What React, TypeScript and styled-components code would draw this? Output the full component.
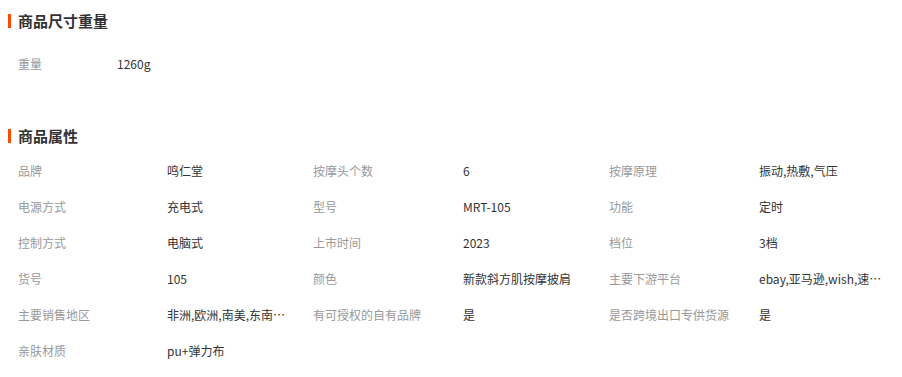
import React from "react";
import styled, { createGlobalStyle } from "styled-components";

const Global = createGlobalStyle`
  html, body { margin: 0; padding: 0; background: #fff; }
  body {
    font-family: "Microsoft YaHei", "Noto Sans CJK SC", "Noto Sans", sans-serif;
    font-size: 12px;
    color: #333;
  }
`;

const Page = styled.div`
  width: 902px;
  padding-top: 11px;
`;

const Section = styled.section<{ $gap: number }>`
  margin-bottom: ${(p) => p.$gap}px;
`;

const Title = styled.h3`
  margin: 0;
  padding-left: 18px;
  position: relative;
  height: 20px;
  line-height: 20px;
  font-size: 15px;
  font-weight: bold;
  color: #333;
  &::before {
    content: "";
    position: absolute;
    left: 8px;
    top: 3px;
    width: 3px;
    height: 14px;
    background: #ff4a00;
  }
`;

const Grid = styled.div<{ $cols: string; $top: number }>`
  display: grid;
  grid-template-columns: ${(p) => p.$cols};
  padding-left: 18px;
  margin-top: ${(p) => p.$top}px;
`;

const Label = styled.div`
  height: 36px;
  line-height: 36px;
  color: #999;
  white-space: nowrap;
`;

const Value = styled.div`
  height: 36px;
  line-height: 36px;
  color: #333;
  max-width: 126px;
  white-space: nowrap;
  overflow: hidden;
  text-overflow: ellipsis;
`;

const attrs: [string, string][] = [
  ["品牌", "鸣仁堂"],
  ["按摩头个数", "6"],
  ["按摩原理", "振动,热敷,气压"],
  ["电源方式", "充电式"],
  ["型号", "MRT-105"],
  ["功能", "定时"],
  ["控制方式", "电脑式"],
  ["上市时间", "2023"],
  ["档位", "3档"],
  ["货号", "105"],
  ["颜色", "新款斜方肌按摩披肩"],
  ["主要下游平台", "ebay,亚马逊,wish,速卖通,独立站"],
  ["主要销售地区", "非洲,欧洲,南美,东南亚,北美,东北亚,中东"],
  ["有可授权的自有品牌", "是"],
  ["是否跨境出口专供货源", "是"],
  ["亲肤材质", "pu+弹力布"],
];

export default function App() {
  return (
    <Page>
      <Global />
      <Section $gap={44}>
        <Title>商品尺寸重量</Title>
        <Grid $cols="99px 1fr" $top={15}>
          <Label>重量</Label>
          <Value>1260g</Value>
        </Grid>
      </Section>
      <Section $gap={0}>
        <Title>商品属性</Title>
        <Grid $cols="149px 146px 150px 146px 150px 1fr" $top={7}>
          {attrs.map(([k, v]) => (
            <React.Fragment key={k}>
              <Label>{k}</Label>
              <Value>{v}</Value>
            </React.Fragment>
          ))}
        </Grid>
      </Section>
    </Page>
  );
}
